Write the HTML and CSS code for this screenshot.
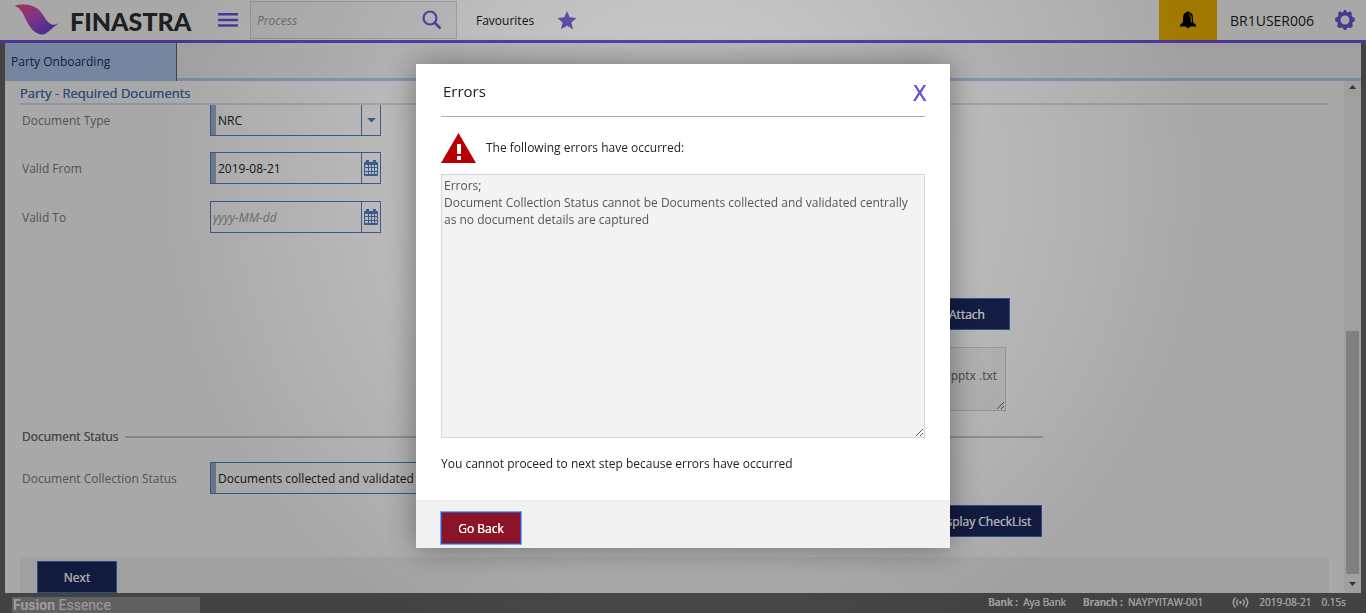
FILE: index.html
```html
<!DOCTYPE html>
<html lang="en">
<head>
<meta charset="utf-8">
<title>Fusion Essence</title>
<link rel="stylesheet" href="styles.css">
</head>
<body>
<svg width="0" height="0" class="sprite" aria-hidden="true">
  <symbol id="calendar" viewBox="0 0 14 16">
    <path fill="currentColor" fill-rule="evenodd" d="M1 2H2V0H5V2H9V0H12V2H13Q14 2 14 3V15Q14 16 13 16H1Q0 16 0 15V3Q0 2 1 2ZM1 5V7H4V5ZM5 5V7H7V5ZM8 5V7H10V5ZM11 5V7H13V5ZM1 8V11H4V8ZM5 8V11H7V8ZM8 8V11H10V8ZM11 8V11H13V8ZM1 12V14H4V12ZM5 12V14H7V12ZM8 12V14H10V12ZM11 12V14H13V12Z"/>
  </symbol>
</svg>
<div class="app">
  <header class="topbar">
    <div class="brand">
      <svg class="brand-mark" width="48" height="32" viewBox="0 0 48 32" aria-hidden="true">
        <defs><linearGradient id="wing" x1="0" y1="0" x2="1" y2="1">
          <stop offset="0" stop-color="#f0507c"/><stop offset=".4" stop-color="#c850c8"/><stop offset=".75" stop-color="#7a45dd"/><stop offset="1" stop-color="#5560e8"/>
        </linearGradient></defs>
        <path fill="url(#wing)" d="M0 2C10-1 19 1 24 5C30 10 31 17 37 20C40 22 43 20 47 18C40 22 36 27 31 30C26 32 20 28 17 24C11 17 9 3 0 2Z"/>
      </svg>
      <span class="brand-name">FINASTRA</span>
    </div>
    <button class="icon-btn menu" aria-label="Menu"><svg width="20" height="14" viewBox="0 0 20 14"><path d="M0 1.200H20M0 7H20M0 12.500H20" stroke="currentColor" stroke-width="2.600"/></svg></button>
    <div class="search">
      <input type="text" placeholder="Process" aria-label="Process">
      <button class="icon-btn" aria-label="Search"><svg width="20" height="20" viewBox="0 0 20 20"><circle cx="8" cy="8" r="6.500" fill="none" stroke="currentColor" stroke-width="2.200"/><path d="M12.500 12.500L18.500 18.500" stroke="currentColor" stroke-width="2.500"/></svg></button>
    </div>
    <a class="favourites" href="#">Favourites
      <svg width="20" height="19" viewBox="0 0 20 19" aria-hidden="true"><path fill="currentColor" d="M10 0L12.700 6.300L19.500 7L14.400 11.500L16 18.300L10 14.800L4 18.300L5.600 11.500L.5 7L7.300 6.300Z"/></svg></a>
    <div class="account">
      <button class="bell" aria-label="Notifications"><svg width="16" height="18" viewBox="0 0 16 18"><path fill="#000" d="M7 1Q8-.5 9 1Q13 2 13 7V11L16 14V15.500H10Q9.500 17 8 17Q6.500 17 6 15.500H0V14L3 11V7Q3 2 7 1Z"/><path d="M9 2.600Q11.200 4 11.200 8V11.500" fill="none" stroke="#f4b800"/></svg></button>
      <span class="user">BR1USER006</span>
      <button class="icon-btn" aria-label="Settings"><svg width="20" height="20" viewBox="0 0 20 20"><path fill="currentColor" fill-rule="evenodd" d="M8.300 2L9 0H11L11.700 2L13 2.400L15 1.300L17 3L16.500 5L17.500 7L19.800 8V11L17.700 12.300L17.200 13.800L18 16L16 18L14 17.400L12 18L11 20H9L8 18L6 17.400L4 18L2 16L2.800 13.800L2.300 12.300L.2 11V8L2.500 7L3.500 5L3 3L5 1.300L7 2.400ZM10 5.500A4.500 4.500 0 1 0 10 14.500A4.500 4.500 0 1 0 10 5.500Z"/></svg></button>
    </div>
  </header>
  <nav class="tabs"><a class="tab" href="#">Party Onboarding</a></nav>
  <div class="workspace">
    <main class="page">
      <h1 class="page-title">Party - Required Documents</h1>
      <div class="page-body">
        <form class="form">
          <div class="row row-first">
            <label for="type">Document Type</label>
            <div class="field required"><select id="type"><option>NRC</option></select>
              <span class="addon"><svg width="9" height="5" viewBox="0 0 9 5"><path fill="currentColor" d="M0 0H9L4.500 4.500Z"/></svg></span></div>
          </div>
          <div class="row">
            <label for="from">Valid From</label>
            <div class="field required"><input id="from" type="text" value="2019-08-21">
              <button type="button" class="addon" aria-label="Pick valid from date"><svg width="14" height="16"><use href="#calendar"/></svg></button></div>
          </div>
          <div class="row">
            <label for="to">Valid To</label>
            <div class="field"><input id="to" type="text" placeholder="yyyy-MM-dd">
              <button type="button" class="addon" aria-label="Pick valid to date"><svg width="14" height="16"><use href="#calendar"/></svg></button></div>
          </div>
          <div class="upload">
            <button type="button" class="btn attach">Attach</button>
            <textarea class="formats" aria-label="Allowed formats" readonly>.pptx .txt</textarea>
          </div>
          <h2 class="section">Document Status</h2>
          <div class="row row-status">
            <label for="status">Document Collection Status</label>
            <div class="field field-wide required"><select id="status"><option>Documents collected and validated centrally</option></select></div>
          </div>
          <button type="button" class="btn checklist">Display CheckList</button>
        </form>
        <div class="actions"><button class="btn">Next</button></div>
      </div>
    </main>
    <div class="scrollbar" aria-hidden="true">
      <svg width="7" height="4" viewBox="0 0 7 4"><path fill="#505050" d="M0 4H7L3.500 0Z"/></svg>
      <div class="track"><div class="thumb"></div></div>
      <svg width="7" height="4" viewBox="0 0 7 4"><path fill="#505050" d="M0 0H7L3.500 4Z"/></svg>
    </div>
  </div>
  <footer class="status">
    <div class="product"><b>Fusion</b> Essence</div>
    <div class="facts">
      <span><b>Bank :</b>&nbsp; Aya Bank</span>
      <span><b>Branch :</b>&nbsp; NAYPYITAW-001</span>
      <span class="session">
        <svg width="17" height="11" viewBox="0 0 17 11" aria-hidden="true"><g fill="none" stroke="currentColor" stroke-width="1.500"><path d="M3.500 .5Q-1 5.500 3.500 10.500M6 2.500Q3.500 5.500 6 8.500M11 2.500Q13.500 5.500 11 8.500M13.500 .5Q18 5.500 13.500 10.500"/></g><circle cx="8.500" cy="5.500" r="1.400" fill="currentColor"/></svg>
        <span>2019-08-21</span></span>
      <span>0.15s</span>
    </div>
  </footer>
</div>
<div class="overlay">
  <section class="dialog" role="dialog" aria-labelledby="dialog-title">
    <div class="dialog-body">
      <header class="dialog-head"><h2 id="dialog-title">Errors</h2><button class="close" aria-label="Close">X</button></header>
      <div class="alert">
        <svg width="35" height="30" viewBox="0 0 35 30" aria-hidden="true"><path fill="#b80000" d="M17.500 0L35 30H0Z"/><path fill="#fff" d="M16 11H20V21H16ZM16 23H20V27H16Z"/></svg>
        <label for="errors">The following errors have occurred:</label>
      </div>
      <textarea id="errors" class="errors" readonly>Errors;
Document Collection Status cannot be Documents collected and validated centrally as no document details are captured</textarea>
      <p class="note">You cannot proceed to next step because errors have occurred</p>
    </div>
    <footer class="dialog-foot"><button class="btn back">Go Back</button></footer>
  </section>
</div>
</body>
</html>
```
FILE: styles.css
```css
* { box-sizing: border-box; }
html, body { height: 100%; }
body { margin: 0; overflow: hidden; background: #666; color: #222; font: 12px/17px "Open Sans", "Noto Sans", sans-serif; }
button, input, select, textarea { font: inherit; color: inherit; border-radius: 0; margin: 0; }
h1, h2, p { margin: 0; font-size: inherit; }
a { color: inherit; text-decoration: none; }
svg { display: block; flex: none; }
.sprite { position: absolute; }
.app { display: flex; flex-direction: column; height: 100vh; }

.topbar { display: flex; align-items: center; flex: none; height: 43px; border-bottom: 3px solid #7252e2; background: #fff; }
.brand { display: flex; align-items: center; gap: 8px; width: 218px; padding-left: 14px; }
.brand-name { padding-top: 2px; color: #2d2f33; font: 900 25px/28px Lato, sans-serif; }
.icon-btn { padding: 0; border: 0; background: none; color: #7252e2; }
.menu { width: 32px; }
.search { display: flex; align-items: center; width: 207px; height: 38px; padding: 0 14px 0 6px; border: 1px solid #d6d6d6; background: #f6f6f6; }
.search input { flex: 1; min-width: 0; padding: 0; border: 0; background: none; }
::placeholder { color: #999; font-style: italic; opacity: 1; }
.favourites { display: flex; align-items: center; gap: 23px; margin-left: 19px; }
.favourites svg { color: #7e62dc; }
.account { display: flex; align-items: center; align-self: stretch; gap: 13px; margin-left: auto; padding-right: 11px; }
.bell { display: grid; place-items: center; width: 58px; height: 40px; padding: 0; border: 0; background: #f4b800; }
.user { width: 92px; font-size: 14px; }

.tabs { flex: none; margin: 0 5px; height: 38px; border-bottom: 3px solid #b8cdf2; background: #f3f3f3; }
.tab { display: block; width: 172px; height: 38px; padding: 10px 6px; border-right: 1px solid #666; background: #b5ccf1; color: #1d2b62; }

.workspace { display: flex; flex: 1; min-height: 0; margin: 0 5px; background: #fff; }
.page { display: flex; flex-direction: column; flex: 1; min-width: 0; padding: 0 15px; }
.page-title { flex: none; height: 24px; border-bottom: 2px solid #dde4ea; color: #4c77ba; font-size: 13px; font-weight: 500; line-height: 24px; text-shadow: 0 0 currentColor; }
.page-body { display: flex; flex-direction: column; justify-content: space-between; flex: 1; min-height: 0; overflow: hidden; }
.form { display: flex; flex-direction: column; width: 1023px; padding-left: 2px; }
.row { display: flex; align-items: center; margin-bottom: 17px; color: #808080; }
.row-first { margin: -1px 0 16px; }
.row label { width: 188px; }
.field { display: flex; width: 171px; height: 32px; border: 1px solid #527fc6; background: #fff; color: #222; }
.field-wide { width: 300px; }
.field.required::before { content: ""; width: 5px; background: #9eb2d6; }
.field input, .field select { flex: 1; min-width: 0; padding: 0 2px; border: 0; background: none; appearance: none; }
.addon { display: grid; place-items: center; width: 19px; padding: 0; border: 0; border-left: 1px solid #527fc6; background: none; color: #527fc6; }
.upload { display: flex; flex-direction: column; gap: 17px; align-items: flex-end; margin: 48px 33px 17px 0; }
.btn { width: 80px; height: 32px; padding: 0; border: 1px solid #4672b8; background: #1a2860; color: #fff; font-weight: 500; text-shadow: 0 0 currentColor; }
.attach { width: 86px; }
.formats { width: 300px; height: 64px; margin-right: 4px; padding: 19px 8px; border: 1px solid #d4d4d4; background: #f6f6f6; color: #666; text-align: right; }
.section { display: flex; align-items: center; gap: 6px; color: #707070; font-weight: 500; text-shadow: 0 0 currentColor; }
.section::after { content: ""; flex: 1; height: 2px; background: #ccc; }
.row-status { margin: 17px 0 11px; }
.checklist { align-self: flex-end; width: 118px; margin-right: 1px; }
.actions { flex: none; padding: 4px 17px 0; background: #f3f3f3; }
.actions .btn { display: block; }
.scrollbar { display: flex; flex-direction: column; align-items: center; width: 17px; padding: 4px 0 7px; background: #f1f1f1; }
.track { flex: 1; display: flex; align-items: flex-end; width: 13px; margin: 9px 0 8px; }
.thumb { width: 100%; height: 51%; background: #c1c1c1; }

.status { display: flex; align-items: center; justify-content: space-between; flex: none; height: 20px; padding: 0 20px 0 12px; color: #eee; }
.product { align-self: flex-end; width: 188px; height: 16px; padding-left: 1px; background: #949494; font: 14px/16px Roboto, sans-serif; }
.facts { display: flex; gap: 17px; padding-bottom: 2px; font-size: 10px; font-weight: 500; text-shadow: 0 0 currentColor; }
.facts b { font-weight: 600; }
.session { display: flex; align-items: center; gap: 10px; margin-left: 12px; margin-right: -7px; }

.overlay { position: fixed; inset: 0; display: grid; place-items: center; padding-bottom: 1px; background: radial-gradient(circle 520px at 50% 180px, rgba(0, 0, 0, .18), rgba(0, 0, 0, .34)); }
.dialog { width: 534px; background: #fff; box-shadow: 0 0 30px rgba(0, 0, 0, .4); }
.dialog-body { padding: 16px 25px 28px; }
.dialog-head { display: flex; align-items: center; justify-content: space-between; height: 37px; padding-left: 2px; padding-bottom: 13px; border-bottom: 1px solid #b0b0b0; }
.dialog-head h2 { font-size: 15px; font-weight: 400; }
.close { padding: 4px 0 0; margin-right: -2px; border: 0; background: none; color: #694ed6; font: 24px/24px "DejaVu Sans", sans-serif; font-size: 21px; text-shadow: 0 0 currentColor; }
.alert { display: flex; align-items: center; gap: 10px; margin: 16px 0 11px; }
.alert label { padding-bottom: 2px; }
.errors { display: block; width: 100%; height: 264px; padding: 2px; border: 1px solid #d6d6d6; background: #f3f3f3; color: #555; }
.note { margin-top: 17px; }
.dialog-foot { height: 48px; padding: 11px 25px 0; border-top: 1px solid #ececec; background: #f1f1f1; }
.back { display: block; border-color: #3a50b0; outline: 1px solid #7ba6f0; background: #8c1427; }
```
